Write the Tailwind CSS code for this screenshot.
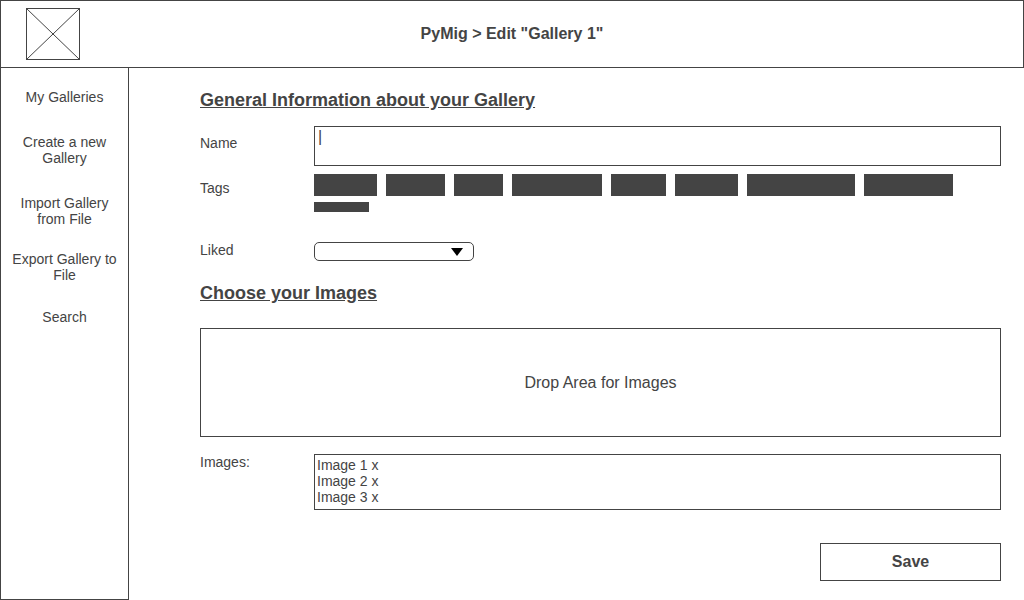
<!DOCTYPE html>
<html lang="en">
<head>
<meta charset="utf-8">
<meta name="viewport" content="width=device-width, initial-scale=1">
<title>PyMig - Edit Gallery</title>
<script src="https://cdn.jsdelivr.net/npm/@tailwindcss/browser@4"></script>
</head>
<body class="flex min-h-screen flex-col bg-white font-['Liberation_Sans',Arial,sans-serif] text-sm/4 text-[#444]">
  <header class="grid grid-cols-[1fr_auto_1fr] items-center border border-[#444] px-[25px] py-[7px]">
    <svg class="h-[52px] w-[54px]" viewBox="0 0 54 52" fill="none" stroke="#444" role="img" aria-label="Logo">
      <rect x=".5" y=".5" width="53" height="51"/>
      <path d="M.5 .5 53.5 51.5M53.5 .5 .5 51.5"/>
    </svg>
    <h1 class="text-base/5 font-bold">PyMig &gt; Edit "Gallery 1"</h1>
  </header>
  <div class="flex flex-1">
    <nav class="flex w-[129px] shrink-0 flex-col border-x border-b border-[#444] px-2 pt-[21px] text-center">
      <a href="#">My Galleries</a>
      <a href="#" class="mt-[29px]">Create a new Gallery</a>
      <a href="#" class="mt-[29px]">Import Gallery from File</a>
      <a href="#" class="mt-6">Export Gallery to File</a>
      <a href="#" class="mt-[26px]">Search</a>
    </nav>
    <main class="min-w-0 flex-1 pt-[22px] pr-[23px] pb-[19px] pl-[71px]">
      <form>
        <h2 class="text-lg/5 font-bold underline">General Information about your Gallery</h2>
        <div class="mt-4 grid grid-cols-[114px_1fr] gap-y-2">
          <label for="name" class="pt-[9px]">Name</label>
          <input id="name" type="text" value="|" class="block h-10 w-full border border-[#444] px-[3px] pb-[18px] text-base/5 outline-none">
          <span id="tags" class="pt-1.5">Tags</span>
          <ul aria-labelledby="tags" class="flex flex-wrap items-start gap-x-[9px] gap-y-1.5">
            <li class="h-[22px] w-[63px] bg-[#444]"></li>
            <li class="h-[22px] w-[59px] bg-[#444]"></li>
            <li class="h-[22px] w-[49px] bg-[#444]"></li>
            <li class="h-[22px] w-[90px] bg-[#444]"></li>
            <li class="h-[22px] w-[55px] bg-[#444]"></li>
            <li class="h-[22px] w-[63px] bg-[#444]"></li>
            <li class="h-[22px] w-[108px] bg-[#444]"></li>
            <li class="h-[22px] w-[89px] bg-[#444]"></li>
            <li class="h-2.5 w-[55px] bg-[#444]"></li>
          </ul>
        </div>
        <div class="mt-[30px] grid grid-cols-[114px_1fr]">
          <label for="liked">Liked</label>
          <div class="grid w-40 items-center">
            <select id="liked" class="col-start-1 row-start-1 h-[19px] w-full appearance-none rounded-[5px] border border-[#444] bg-white px-2">
              <option value=""></option>
              <option>Yes</option>
              <option>No</option>
            </select>
            <svg class="pointer-events-none col-start-1 row-start-1 mr-[11px] h-2 w-3 justify-self-end" viewBox="0 0 12 8" aria-hidden="true"><path d="M0 0h12L6 8z"/></svg>
          </div>
        </div>
        <h2 class="mt-[22px] text-lg/5 font-bold underline">Choose your Images</h2>
        <button type="button" class="mt-[25px] flex h-[109px] w-full items-center justify-center border border-[#444] text-base/5">Drop Area for Images</button>
        <div class="mt-[17px] grid grid-cols-[114px_1fr]">
          <span id="images">Images:</span>
          <ul aria-labelledby="images" class="border border-[#444] px-0.5 pt-0.5 pb-1">
            <li>Image 1 x</li>
            <li>Image 2 x</li>
            <li>Image 3 x</li>
          </ul>
        </div>
        <button type="submit" class="mt-[33px] ml-auto block h-[38px] w-[181px] border border-[#444] text-base/5 font-bold">Save</button>
      </form>
    </main>
  </div>
</body>
</html>
